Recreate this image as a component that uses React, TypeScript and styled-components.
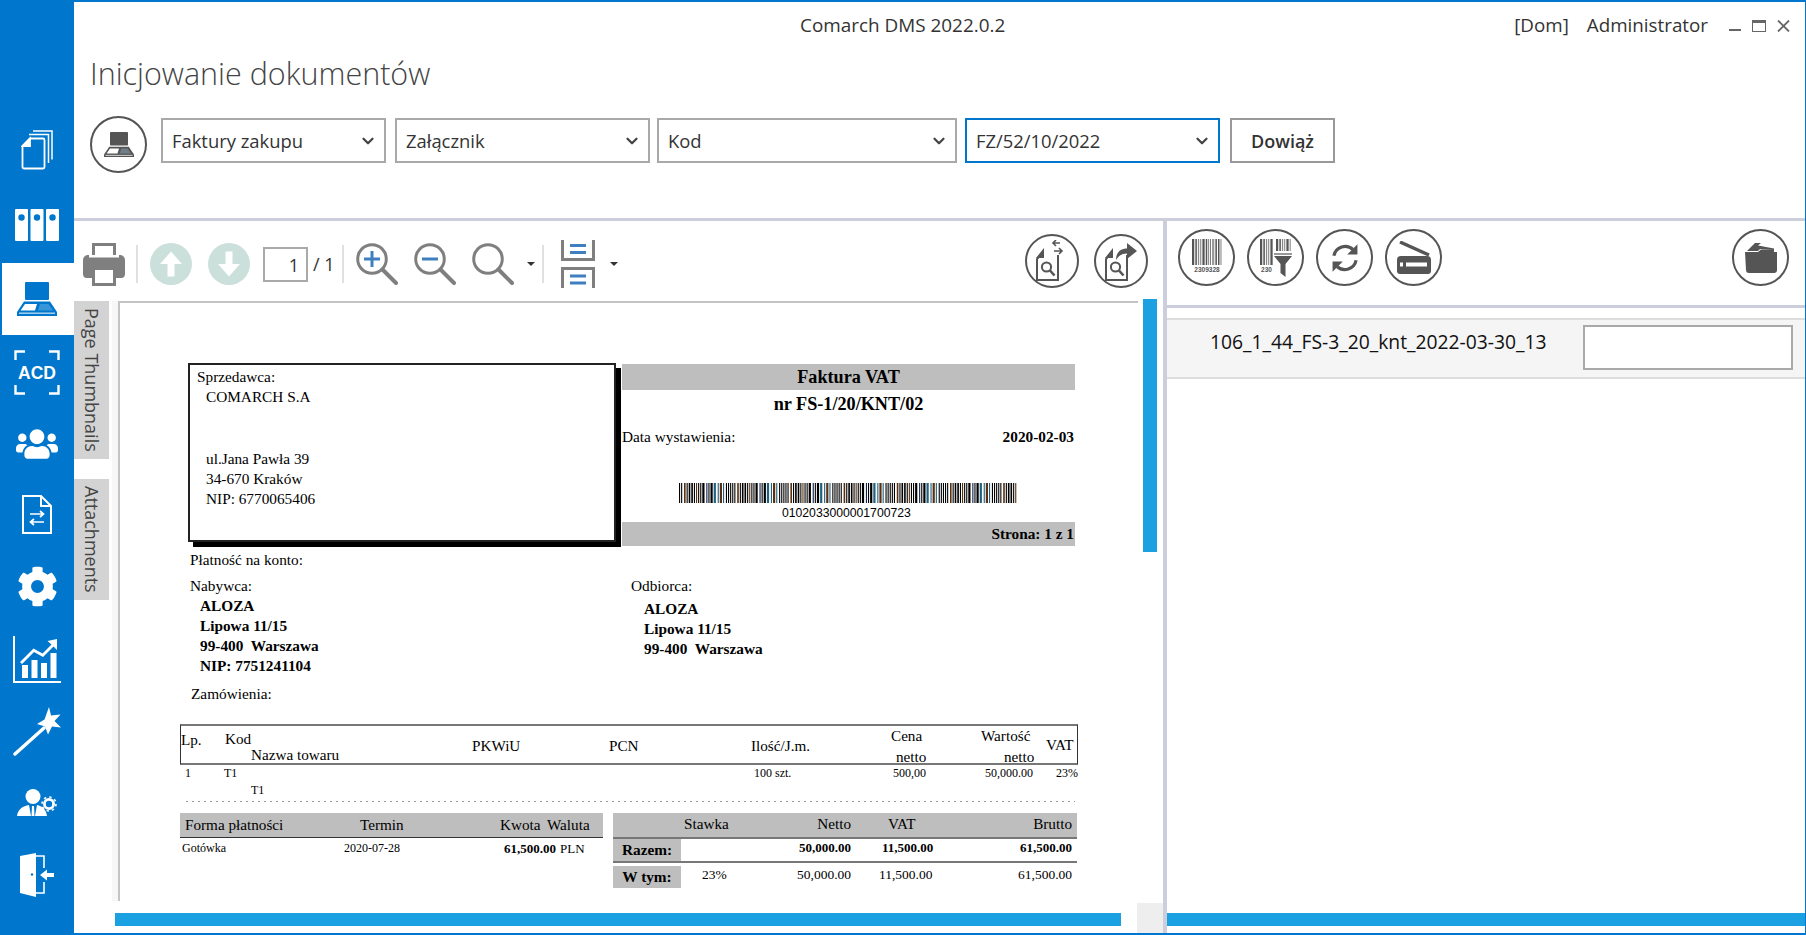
import React, { FC, ReactNode } from 'react'
import styled, { createGlobalStyle } from 'styled-components'
import { ChevronDown } from 'lucide-react'
import { FaCog, FaUsers } from 'react-icons/fa'

const BLUE = '#0077cc'
const SCROLL = '#1ba1e2'
const DARK = '#555555'
const GRAY = '#7f7f7f'
const LINE = '#cccedb'
const BAND = '#bebebe'

const GlobalStyle = createGlobalStyle`
  html, body { margin: 0; padding: 0; background: #fff; overflow: hidden; }
  * { box-sizing: border-box; }
`

/* ---------- sidebar icons ---------- */

const DocsIcon = () => (
  <svg width="32" height="40" viewBox="0 0 32 40" fill="none" stroke="#fff" strokeWidth="1.8">
    <path d="M9 8.5H22a1.5 1.5 0 0 1 1.5 1.5V37a1.5 1.5 0 0 1-1.5 1.5H3A1.5 1.5 0 0 1 1.5 37V16Z" />
    <path d="M9 8.5V16H1.5Z" fill="#fff" />
    <path d="M8 4.5H27.5V33M12 1H31V29.5" strokeWidth="1.5" />
  </svg>
)

const BindersIcon = () => (
  <svg width="44" height="32" viewBox="0 0 44 32">
    {[0, 15.5, 31].map((x) => (
      <g key={x}>
        <rect x={x} y="0" width="13" height="32" rx="1" fill="#fff" />
        <circle cx={x + 6.5} cy="8.5" r="3.2" fill={BLUE} />
      </g>
    ))}
  </svg>
)

const ScannerIcon: FC<{ fill: string; w?: number }> = ({ fill, w = 40 }) => (
  <svg width={w} height={w * 0.85} viewBox="0 0 40 34">
    <rect x="8" y="0" width="24" height="18" rx="1" fill={fill} />
    <path d="M7 19.5H33L40 30V34H0V30Z" fill={fill} />
    <path d="M8 22H20L18 28.5H3.5Z" fill="#fff" />
    <path d="M23 22H31.5L36 28.5H21Z" fill="#9fcdee" opacity="0.35" />
    <rect x="2" y="30.5" width="36" height="1.4" fill="#fff" opacity="0.7" />
  </svg>
)

const AcdIcon = () => (
  <svg width="46" height="45" viewBox="0 0 46 45" fill="none" stroke="#fff" strokeWidth="2.4">
    <path d="M1.5 10V1.5H11M35 1.5H44.5V10M1.5 35V43.5H11M35 43.5H44.5V35" />
    <text x="23" y="28.5" textAnchor="middle" fill="#fff" stroke="none" fontFamily="Liberation Sans" fontWeight="700" fontSize="17.5">
      ACD
    </text>
  </svg>
)

const SwapDocIcon = () => (
  <svg width="30" height="39" viewBox="0 0 30 39" fill="none" stroke="#fff" strokeWidth="2">
    <path d="M1 1H19L29 11V38H1Z" />
    <path d="M19 1V11H29" />
    <path d="M8 19H21M18 16l3.5 3-3.5 3M22 27H9M12 24l-3.5 3 3.5 3" strokeWidth="1.7" />
  </svg>
)

const ChartIcon = () => (
  <svg width="48" height="47" viewBox="0 0 48 47" fill="none" stroke="#fff">
    <path d="M1 0V46H48" strokeWidth="2" />
    <g fill="#fff" stroke="none">
      <rect x="9" y="29" width="6" height="13" />
      <rect x="18.5" y="24" width="6" height="18" />
      <rect x="28" y="27" width="6" height="15" />
      <rect x="37.5" y="17" width="6" height="25" />
      <path d="M44 3V14L40.5 10.5 30 21 21 16 9 28 7 26 20.5 12.5 29.5 17.5 38.5 8.5 34.5 5Z" />
    </g>
  </svg>
)

const WandIcon = () => (
  <svg width="48" height="49" viewBox="0 0 48 49">
    <path d="M2 47L31 21" stroke="#fff" strokeWidth="3.4" strokeLinecap="round" />
    <path d="M36 0L38 8.5 47.5 7.5 41.5 14 48 20.5 39 19.5 35 27.5 32 19.5 24 17 31.5 12.5Z" fill="#fff" />
  </svg>
)

const UserGearIcon = () => (
  <svg width="40" height="27" viewBox="0 0 40 27">
    <circle cx="16" cy="7.5" r="7.5" fill="#fff" />
    <path d="M0 27C1 20 6 17 12 16L14 27ZM20 16C25 17 29 20 30 27H18Z" fill="#fff" />
    <path d="M15 17H17L17.5 27H14.5Z" fill="#fff" />
    <circle cx="32" cy="15" r="4.6" fill="none" stroke="#fff" strokeWidth="2.8" />
    <circle cx="32" cy="15" r="7" fill="none" stroke="#fff" strokeWidth="1.6" strokeDasharray="2.4 3.1" />
  </svg>
)

const DoorIcon = () => (
  <svg width="34" height="44" viewBox="0 0 34 44" fill="none">
    <path d="M0 3L16 0V44L0 40Z" fill="#fff" />
    <circle cx="12" cy="21.5" r="1.2" fill={BLUE} />
    <path d="M16 3H24V15M24 29V40H16" stroke="#fff" strokeWidth="1.6" />
    <path d="M34 20H27V16.5L20 22 27 27.5V24H34Z" fill="#fff" />
  </svg>
)

/* ---------- toolbar icons ---------- */

const PrintIcon = () => (
  <svg width="42" height="43" viewBox="0 0 42 43" fill="none">
    <path d="M10.5 12V1.5H31.5V12" stroke={GRAY} strokeWidth="3" />
    <path d="M5 12H6V14.5H36V12H37a5 5 0 0 1 5 5V31a4 4 0 0 1-4 4H4a4 4 0 0 1-4-4V17a5 5 0 0 1 5-5Z" fill={GRAY} />
    <rect x="10.5" y="25.5" width="21" height="16" fill="#fff" stroke={GRAY} strokeWidth="3" />
  </svg>
)

const ArrowDisc: FC<{ down?: boolean }> = ({ down }) => (
  <svg width="42" height="42" viewBox="0 0 42 42">
    <circle cx="21" cy="21" r="21" fill="#cbe0da" />
    <path d={down ? 'M17.5 8.5H24.5V21H32L21 33.5 10 21H17.5Z' : 'M17.5 33.5H24.5V21H32L21 8.5 10 21H17.5Z'} fill="#fff" />
  </svg>
)

const Lens: FC<{ mark?: 'plus' | 'minus' }> = ({ mark }) => (
  <svg width="42" height="42" viewBox="0 0 42 42" fill="none">
    <circle cx="16" cy="16" r="14.3" stroke={GRAY} strokeWidth="3" />
    <path d="M26.5 26.5L40 40" stroke={GRAY} strokeWidth="4" strokeLinecap="round" />
    {mark && <path d="M8 16H24" stroke="#3f7fbf" strokeWidth="3" />}
    {mark === 'plus' && <path d="M16 8V24" stroke="#3f7fbf" strokeWidth="3" />}
  </svg>
)

const PageViewIcon = () => (
  <svg width="34" height="48" viewBox="0 0 34 48" fill="none">
    <path d="M1.5 0V19.5H32.5V0M1.5 48V28.5H32.5V48" stroke={GRAY} strokeWidth="3" />
    <path d="M9 5.5H25M9 12.5H25M9 36H25M9 43H25" stroke="#3f7fbf" strokeWidth="3" />
  </svg>
)

const Caret = styled.span`
  width: 0;
  height: 0;
  border-left: 4.5px solid transparent;
  border-right: 4.5px solid transparent;
  border-top: 4.5px solid #333;
`

const DocSearch: FC<{ share?: boolean }> = ({ share }) => (
  <svg width="34" height="42" viewBox="0 0 34 42" fill="none" stroke={DARK}>
    <path d="M8 15V12L2 19V40H23V15" strokeWidth="2" fill="#fff" />
    <path d="M9 8L1 18H9Z" fill={DARK} stroke="none" />
    <circle cx="11.5" cy="27" r="4.6" strokeWidth="2" />
    <path d="M15 30.5L19.5 35.5" strokeWidth="2.6" />
    {share ? (
      <path d="M12 20C12 12 17 8.5 23 8.5V3L33 11 23 19V13.5C18 13.5 15 15.5 12 20Z" fill={DARK} stroke="none" />
    ) : (
      <path d="M25 3L18 3M21 0L18 3l3 3M19 11H27M24 8l3 3-3 3" strokeWidth="1.6" />
    )}
  </svg>
)

const barsA = [3, 2, 1, 2, 3, 2, 1, 1, 3, 2, 2, 1, 3, 1, 2, 2, 3, 1, 3, 2, 1]

const BarcodeGlyph: FC<{ w: number; h: number; label: string }> = ({ w, h, label }) => {
  let x = 0
  const bars: ReactNode[] = []
  barsA.forEach((b, i) => {
    if (x + b * 0.8 > w) return
    bars.push(<rect key={i} x={x} y="0" width={b * 0.75} height={h} fill={i % 5 === 3 ? '#999' : DARK} />)
    x += b * 0.75 + 1.1
  })
  return (
    <>
      {bars}
      <text x={w / 2} y={h + 6.5} textAnchor="middle" fontSize="6.5" fontFamily="Liberation Sans" fontWeight="700" fill={DARK}>
        {label}
      </text>
    </>
  )
}

const BarcodeIcon = () => (
  <svg width="30" height="38" viewBox="0 0 30 38">
    <BarcodeGlyph w={30} h={26} label="2309328" />
  </svg>
)

const BarcodeFilterIcon = () => (
  <svg width="32" height="38" viewBox="0 0 32 38">
    <BarcodeGlyph w={13} h={26} label="230" />
    <g transform="translate(16 0)">
      <BarcodeGlyph w={15} h={12} label="" />
    </g>
    <rect x="14" y="14" width="18" height="2" fill="#999" />
    <path d="M14 17H32L25.5 25V38L20.5 34V25Z" fill={DARK} />
  </svg>
)

const RefreshIcon = () => (
  <svg width="32" height="32" viewBox="0 0 36 36" fill="none" stroke={DARK} strokeWidth="3.6">
    <path d="M5.5 15.5A13 13 0 0 1 27 8.5" />
    <path d="M30.5 20.5A13 13 0 0 1 9 27.5" />
    <path d="M32 2.5V14H20.5Z" fill={DARK} stroke="none" />
    <path d="M4 33.5V22H15.5Z" fill={DARK} stroke="none" />
  </svg>
)

const FlatbedIcon = () => (
  <svg width="36" height="34" viewBox="0 0 36 34">
    <path d="M4 1L33 14" stroke={DARK} strokeWidth="3.4" />
    <path d="M5 15H31a4 4 0 0 1 4 4V30a3 3 0 0 1-3 3H4a3 3 0 0 1-3-3V19a4 4 0 0 1 4-4Z" fill={DARK} />
    <rect x="10" y="21.5" width="21" height="4" fill="#fff" />
    <rect x="4" y="21.5" width="3" height="4" fill="#fff" />
  </svg>
)

const FolderIcon = () => (
  <svg width="32" height="30" viewBox="0 0 32 30">
    <path d="M2 8L10 0H16L13 2.5 29 5.5 29 7 15 6 13 8Z" fill={DARK} />
    <path d="M0 9H32V27a3 3 0 0 1-3 3H4a3 3 0 0 1-3-3Z" fill={DARK} />
    <path d="M13 9L16 6.5H29V9Z" fill={DARK} />
  </svg>
)

const barcodeRects = () => {
  const rects: ReactNode[] = []
  let seed = 17
  let x = 0
  const tints = ['#000', '#000', '#000', '#102050', '#5a3010', '#000', '#206080', '#000']
  while (x < 338) {
    seed = (seed * 73 + 41) % 211
    const w = 1 + (seed % 3 === 0 ? 1.2 : seed % 5 === 0 ? 0.6 : 0.1)
    rects.push(<rect key={x} x={x} y="0" width={w} height="20" fill={tints[seed % 8]} />)
    x += w + (seed % 7 === 0 ? 1.8 : 1)
  }
  return rects
}

/* ---------- page ---------- */

const App: FC = () => (
  <>
    <GlobalStyle />
    <Window>
      <Sidebar>
        <NavItem $h={74}><DocsIcon /></NavItem>
        <NavItem $h={76}><BindersIcon /></NavItem>
        <NavItem $h={72} $active><ScannerIcon fill={BLUE} /></NavItem>
        <NavItem $h={74}><AcdIcon /></NavItem>
        <NavItem $h={69}><FaUsers size={42} color="#fff" /></NavItem>
        <NavItem $h={72}><SwapDocIcon /></NavItem>
        <NavItem $h={72}><FaCog size={41} color="#fff" /></NavItem>
        <NavItem $h={75}><ChartIcon /></NavItem>
        <NavItem $h={68}><WandIcon /></NavItem>
        <NavItem $h={75}><UserGearIcon /></NavItem>
        <NavItem $h={70}><DoorIcon /></NavItem>
      </Sidebar>

      <Main>
        <Header>
          <TitleBar>
            <AppTitle>Comarch DMS 2022.0.2</AppTitle>
            <UserArea>
              <span>[Dom]</span>
              <span>Administrator</span>
            </UserArea>
            <WindowButtons>
              <MinButton />
              <MaxButton />
              <svg width="13" height="12" viewBox="0 0 13 12" stroke="#666" strokeWidth="1.8">
                <path d="M1 0.5L12 11.5M12 0.5L1 11.5" />
              </svg>
            </WindowButtons>
          </TitleBar>
          <PageTitle>Inicjowanie dokumentów</PageTitle>
          <Controls>
            <RoundButton $w={57} $h={57}>
              <ScannerIcon fill={DARK} w={30} />
            </RoundButton>
            <Select $w={225} $ml={14}>
              Faktury zakupu
              <ChevronDown size={18} strokeWidth={3} color="#444" />
            </Select>
            <Select $w={255} $ml={9}>
              Załącznik
              <ChevronDown size={18} strokeWidth={3} color="#444" />
            </Select>
            <Select $w={300} $ml={7}>
              Kod
              <ChevronDown size={18} strokeWidth={3} color="#444" />
            </Select>
            <Select $w={255} $ml={8} $focused>
              FZ/52/10/2022
              <ChevronDown size={18} strokeWidth={3} color="#444" />
            </Select>
            <LinkButton>Dowiąż</LinkButton>
          </Controls>
        </Header>

        <Body>
          <ViewerPanel>
            <ViewerToolbar>
              <PrintIcon />
              <ToolSep $ml={11} $mr={12} />
              <ArrowDisc />
              <Spaced $ml={16}><ArrowDisc down /></Spaced>
              <PageInput>1</PageInput>
              <PageCount>/ 1</PageCount>
              <ToolSep $ml={9} $mr={12} />
              <Lens mark="plus" />
              <Spaced $ml={16}><Lens mark="minus" /></Spaced>
              <Spaced $ml={16}><Lens /></Spaced>
              <Spaced $ml={13}><Caret /></Spaced>
              <ToolSep $ml={7} $mr={17} />
              <PageViewIcon />
              <Spaced $ml={15}><Caret /></Spaced>
              <ToolRight>
                <RoundButton $w={54} $h={54}><DocSearch /></RoundButton>
                <RoundButton $w={54} $h={54}><DocSearch share /></RoundButton>
              </ToolRight>
            </ViewerToolbar>

            <ViewerBody>
              <SideTabs>
                <SideTab $h={158}>Page Thumbnails</SideTab>
                <SideTab $h={121}>Attachments</SideTab>
              </SideTabs>
              <Sheet>
                <SheetTop>
                  <SellerBox>
                    <Line>Sprzedawca:</Line>
                    <Line $pl={9}>COMARCH S.A</Line>
                    <Line $pl={9} $mt={42}>ul.Jana Pawła 39</Line>
                    <Line $pl={9}>34-670 Kraków</Line>
                    <Line $pl={9}>NIP: 6770065406</Line>
                  </SellerBox>
                  <InvoiceHead>
                    <TitleBand>Faktura VAT</TitleBand>
                    <InvoiceNumber>nr FS-1/20/KNT/02</InvoiceNumber>
                    <DateRow>
                      <span>Data wystawienia:</span>
                      <b>2020-02-03</b>
                    </DateRow>
                    <BarcodeBox>
                      <svg width="338" height="20" viewBox="0 0 338 20">{barcodeRects()}</svg>
                      <BarcodeNumber>0102033000001700723</BarcodeNumber>
                    </BarcodeBox>
                    <PageBand>Strona: 1 z 1</PageBand>
                  </InvoiceHead>
                </SheetTop>

                <Line $pl={10} $mt={4}>Płatność na konto:</Line>
                <Parties>
                  <Party $w={451} $pl={10}>
                    <Line>Nabywca:</Line>
                    <Line $pl={10} $bold>ALOZA</Line>
                    <Line $pl={10} $bold>Lipowa 11/15</Line>
                    <Line $pl={10} $bold>99-400&nbsp; Warszawa</Line>
                    <Line $pl={10} $bold>NIP: 7751241104</Line>
                  </Party>
                  <Party $w={300}>
                    <Line>Odbiorca:</Line>
                    <Line $pl={13} $mt={3} $bold>ALOZA</Line>
                    <Line $pl={13} $bold>Lipowa 11/15</Line>
                    <Line $pl={13} $bold>99-400&nbsp; Warszawa</Line>
                  </Party>
                </Parties>
                <Line $pl={11} $mt={8}>Zamówienia:</Line>

                <ItemsHead>
                  <HeadCell $pt={6}>Lp.</HeadCell>
                  <HeadCell $pt={5}>
                    Kod
                    <HeadSub>Nazwa towaru</HeadSub>
                  </HeadCell>
                  <HeadCell $pt={12}>PKWiU</HeadCell>
                  <HeadCell $pt={12}>PCN</HeadCell>
                  <HeadCell $pt={12}>Ilość/J.m.</HeadCell>
                  <HeadCell $pt={2} $pl={10}>
                    Cena
                    <HeadNetto $pl={5}>netto</HeadNetto>
                  </HeadCell>
                  <HeadCell $pt={2}>
                    Wartość
                    <HeadNetto $pl={23}>netto</HeadNetto>
                  </HeadCell>
                  <HeadCell $pt={11}>VAT</HeadCell>
                </ItemsHead>
                <ItemsRow>
                  <ItemCell $pl={5}>1</ItemCell>
                  <ItemCell>
                    T1
                    <ItemSub>T1</ItemSub>
                  </ItemCell>
                  <ItemCell />
                  <ItemCell />
                  <ItemCell $pl={4}>100 szt.</ItemCell>
                  <ItemCell $pl={13}>500,00</ItemCell>
                  <ItemCell $pl={5}>50,000.00</ItemCell>
                  <ItemCell $pl={11}>23%</ItemCell>
                </ItemsRow>
                <DottedRule />

                <Summary>
                  <PayTable>
                    <PayHead>
                      <PayCell $pl={5}>Forma płatności</PayCell>
                      <PayCell $pl={16}>Termin</PayCell>
                      <PayCell>Kwota</PayCell>
                      <PayCell>Waluta</PayCell>
                    </PayHead>
                    <PayRow>
                      <PayCell $pl={2}>Gotówka</PayCell>
                      <PayCell>2020-07-28</PayCell>
                      <PayAmount $pl={4}>61,500.00</PayAmount>
                      <PayAmount $pl={13} $plain>PLN</PayAmount>
                    </PayRow>
                  </PayTable>
                  <TotalsTable>
                    <TotalsHead>
                      <span />
                      <TotalCell $pl={3}>Stawka</TotalCell>
                      <TotalCell $right>Netto</TotalCell>
                      <TotalCell $pl={37}>VAT</TotalCell>
                      <TotalCell $right>Brutto</TotalCell>
                    </TotalsHead>
                    <TotalsRow>
                      <TotalLabel>Razem:</TotalLabel>
                      <span />
                      <TotalCell $right $bold>50,000.00</TotalCell>
                      <TotalCell $pl={31} $bold>11,500.00</TotalCell>
                      <TotalCell $right $bold>61,500.00</TotalCell>
                    </TotalsRow>
                    <TotalsRule />
                    <TotalsRow>
                      <TotalLabel>W tym:</TotalLabel>
                      <TotalCell $pl={21}>23%</TotalCell>
                      <TotalCell $right>50,000.00</TotalCell>
                      <TotalCell $pl={28}>11,500.00</TotalCell>
                      <TotalCell $right>61,500.00</TotalCell>
                    </TotalsRow>
                  </TotalsTable>
                </Summary>
              </Sheet>
              <VThumb />
            </ViewerBody>

            <HScrollRow>
              <HThumb $w={1006} />
              <ScrollCorner />
            </HScrollRow>
          </ViewerPanel>

          <QueuePanel>
            <QueueToolbar>
              <RoundButton $w={57} $h={57}><BarcodeIcon /></RoundButton>
              <RoundButton $w={57} $h={57}><BarcodeFilterIcon /></RoundButton>
              <RoundButton $w={57} $h={57}><RefreshIcon /></RoundButton>
              <RoundButton $w={57} $h={57}><FlatbedIcon /></RoundButton>
              <ToolRight>
                <RoundButton $w={57} $h={57}><FolderIcon /></RoundButton>
              </ToolRight>
            </QueueToolbar>
            <QueueList>
              <QueueRow>
                <QueueName>106_1_44_FS-3_20_knt_2022-03-30_13</QueueName>
                <QueueInput />
              </QueueRow>
            </QueueList>
            <QueueScroll>
              <HThumb $w={639} />
            </QueueScroll>
          </QueuePanel>
        </Body>
      </Main>
    </Window>
  </>
)

export default App

const UI_FONT = `'Open Sans', 'Noto Sans', sans-serif`
const DOC_FONT = `'Liberation Serif', 'Times New Roman', serif`

const Window = styled.div`
  display: flex;
  width: 1806px;
  height: 935px;
  overflow: hidden;
  background: #fff;
  border-top: 2px solid ${BLUE};
  border-right: 1px solid ${BLUE};
  border-bottom: 2px solid ${BLUE};
  font-family: ${UI_FONT};
  color: #333;
`

const Sidebar = styled.nav`
  flex: 0 0 74px;
  padding-top: 111px;
  background: ${BLUE};
`

const NavItem = styled.div<{ $h: number; $active?: boolean }>`
  display: flex;
  align-items: center;
  justify-content: center;
  height: ${({ $h }) => $h}px;
  margin-left: ${({ $active }) => ($active ? '2px' : '0')};
  padding-right: ${({ $active }) => ($active ? '2px' : '0')};
  background: ${({ $active }) => ($active ? '#fff' : 'transparent')};
`

const Main = styled.div`
  display: flex;
  flex: 1;
  flex-direction: column;
  min-width: 0;
`

const Header = styled.header`
  flex: 0 0 219px;
  border-bottom: 3px solid ${LINE};
`

const TitleBar = styled.div`
  display: flex;
  align-items: center;
  height: 46px;
  padding: 0 15px 0 726px;
`

const AppTitle = styled.div`
  font-size: 18.9px;
  white-space: nowrap;
`

const UserArea = styled.div`
  display: flex;
  gap: 18px;
  margin-left: auto;
  font-size: 18.8px;
`

const WindowButtons = styled.div`
  display: flex;
  align-items: flex-end;
  gap: 11px;
  margin-left: 21px;
  padding-top: 2px;
`

const MinButton = styled.div`
  width: 12px;
  height: 2px;
  margin-bottom: 1px;
  background: #666;
`

const MaxButton = styled.div`
  width: 14px;
  height: 12px;
  border: 1.5px solid #666;
  border-top-width: 3px;
`

const PageTitle = styled.h1`
  height: 68px;
  margin: 0;
  padding: 7px 0 0 16px;
  font-size: 30.5px;
  line-height: 36px;
  font-weight: 300;
  color: #444;
`

const Controls = styled.div`
  display: flex;
  align-items: flex-start;
  padding-left: 16px;
`

const RoundButton = styled.div<{ $w: number; $h: number }>`
  display: flex;
  flex: none;
  align-items: center;
  justify-content: center;
  width: ${({ $w }) => $w}px;
  height: ${({ $h }) => $h}px;
  border: 2.5px solid ${DARK};
  border-radius: 50%;
  background: #fff;
`

const Select = styled.div<{ $w: number; $ml: number; $focused?: boolean }>`
  display: flex;
  align-items: center;
  justify-content: space-between;
  width: ${({ $w }) => $w}px;
  height: 45px;
  margin: 2px 0 0 ${({ $ml }) => $ml}px;
  padding: 0 7px 0 9px;
  border: 2px solid ${({ $focused }) => ($focused ? BLUE : '#a9a9a9')};
  font-size: 18.4px;
  color: #333;
`

const LinkButton = styled.div`
  display: flex;
  align-items: center;
  justify-content: center;
  width: 105px;
  height: 45px;
  margin: 2px 0 0 10px;
  border: 2px solid #999;
  font-size: 18px;
  font-weight: 600;
  color: #333;
`

const Body = styled.div`
  display: flex;
  flex: 1;
  min-height: 0;
`

const ViewerPanel = styled.section`
  display: flex;
  flex: 0 0 1089px;
  flex-direction: column;
  min-width: 0;
`

const ViewerToolbar = styled.div`
  display: flex;
  flex: 0 0 80px;
  align-items: center;
  padding: 6px 15px 0 9px;
`

const ToolSep = styled.span<{ $ml: number; $mr: number }>`
  width: 2px;
  height: 38px;
  margin: 0 ${({ $mr }) => $mr}px 0 ${({ $ml }) => $ml}px;
  background: #e0e0e0;
`

const Spaced = styled.span<{ $ml: number }>`
  display: flex;
  margin-left: ${({ $ml }) => $ml}px;
`

const PageInput = styled.div`
  width: 45px;
  height: 35px;
  margin-left: 13px;
  padding-right: 7px;
  border: 2px solid #a9a9a9;
  font-size: 18px;
  line-height: 33px;
  text-align: right;
`

const PageCount = styled.span`
  width: 20px;
  margin-left: 5px;
  font-size: 18px;
  white-space: nowrap;
`

const ToolRight = styled.div`
  display: flex;
  gap: 15px;
  margin-left: auto;
  margin-bottom: 6px;
`

const ViewerBody = styled.div`
  position: relative;
  display: flex;
  flex: 1;
  min-height: 0;
`

const SideTabs = styled.div`
  display: flex;
  flex: 0 0 44px;
  flex-direction: column;
  gap: 20px;
`

const SideTab = styled.div<{ $h: number }>`
  display: flex;
  align-items: center;
  justify-content: center;
  width: 35px;
  height: ${({ $h }) => $h}px;
  background: #d3d3d3;
  font-size: 18px;
  color: #444;
  white-space: nowrap;
  writing-mode: vertical-rl;
`

const Sheet = styled.div`
  width: 1020px;
  overflow: hidden;
  padding-left: 60px;
  border-top: 2px solid #c4c4c4;
  border-left: 2px solid #c4c4c4;
  box-shadow: -6px 0 0 #f7f7f7;
  font-family: ${DOC_FONT};
  font-size: 15.3px;
  line-height: 20px;
  color: #000;
`

const VThumb = styled.div`
  position: absolute;
  top: -2px;
  left: 1069px;
  width: 14px;
  height: 253px;
  background: ${SCROLL};
`

const SheetTop = styled.div`
  display: flex;
  margin-top: 60px;
  padding-left: 8px;
`

const SellerBox = styled.div`
  flex: none;
  width: 428px;
  height: 179px;
  padding: 2px 7px;
  border: 2px solid #222;
  box-shadow: 5px 5px 0 #000;
`

const Line = styled.div<{ $pl?: number; $mt?: number; $bold?: boolean }>`
  padding-left: ${({ $pl }) => $pl ?? 0}px;
  margin-top: ${({ $mt }) => $mt ?? 0}px;
  font-weight: ${({ $bold }) => ($bold ? 700 : 400)};
  white-space: nowrap;
`

const InvoiceHead = styled.div`
  flex: none;
  width: 453px;
  margin: 1px 0 0 6px;
`

const TitleBand = styled.div`
  height: 26px;
  background: ${BAND};
  font-size: 18.2px;
  font-weight: 700;
  line-height: 26px;
  text-align: center;
`

const InvoiceNumber = styled.div`
  height: 28px;
  font-size: 18.2px;
  font-weight: 700;
  line-height: 28px;
  text-align: center;
`

const DateRow = styled.div`
  display: flex;
  align-items: center;
  justify-content: space-between;
  height: 38px;
  padding-right: 1px;
`

const BarcodeBox = styled.div`
  display: flex;
  flex-direction: column;
  height: 66px;
  padding: 27px 0 0 57px;

  svg {
    flex: none;
  }
`

const BarcodeNumber = styled.div`
  padding: 1px 0 0 103px;
  font-family: 'Liberation Sans', Arial, sans-serif;
  font-size: 12.2px;
  line-height: 19px;
`

const PageBand = styled.div`
  height: 24px;
  padding-right: 1px;
  background: ${BAND};
  font-weight: 700;
  line-height: 24px;
  text-align: right;
`

const Parties = styled.div`
  display: flex;
  margin-top: 6px;
`

const Party = styled.div<{ $w: number; $pl?: number }>`
  flex: none;
  width: ${({ $w }) => $w}px;
  padding-left: ${({ $pl }) => $pl ?? 0}px;
`

const ITEM_COLS = '44px 247px 137px 142px 130px 100px 65px 33px'

const ItemsHead = styled.div`
  display: grid;
  grid-template-columns: ${ITEM_COLS};
  width: 898px;
  height: 41px;
  margin-top: 20px;
  border-top: 2px solid #777;
  border-right: 1px solid #333;
  border-bottom: 2px solid #777;
  border-left: 1px solid #333;
  font-size: 15.2px;
  line-height: 16px;
`

const HeadCell = styled.div<{ $pt: number; $pl?: number }>`
  padding: ${({ $pt }) => $pt}px 0 0 ${({ $pl }) => $pl ?? 0}px;
  white-space: nowrap;
`

const HeadSub = styled.div`
  padding-left: 26px;
`

const HeadNetto = styled.div<{ $pl: number }>`
  margin-top: 5px;
  padding-left: ${({ $pl }) => $pl}px;
`

const ItemsRow = styled.div`
  display: grid;
  grid-template-columns: ${ITEM_COLS};
  width: 898px;
  height: 36px;
  font-size: 12px;
  line-height: 16px;
`

const ItemCell = styled.div<{ $pl?: number }>`
  padding: 0 0 0 ${({ $pl }) => $pl ?? 0}px;
  white-space: nowrap;
`

const ItemSub = styled.div`
  padding: 1px 0 0 27px;
`

const DottedRule = styled.div`
  width: 889px;
  height: 1px;
  margin-left: 6px;
  background: repeating-linear-gradient(to right, #999 0 2px, transparent 2px 6px);
`

const Summary = styled.div`
  display: flex;
  gap: 10px;
  margin-top: 11px;
`

const PayTable = styled.div`
  flex: 0 0 423px;
`

const PAY_COLS = '164px 156px 47px 56px'

const PayHead = styled.div`
  display: grid;
  grid-template-columns: ${PAY_COLS};
  height: 25px;
  border-bottom: 1px solid #333;
  background: ${BAND};
  font-size: 15.2px;
  line-height: 24px;
`

const PayRow = styled.div`
  display: grid;
  grid-template-columns: ${PAY_COLS};
  padding-top: 2px;
  font-size: 12px;
  line-height: 17px;
`

const PayCell = styled.div<{ $pl?: number }>`
  padding-left: ${({ $pl }) => $pl ?? 0}px;
  white-space: nowrap;
`

const PayAmount = styled(PayCell)<{ $plain?: boolean }>`
  font-size: 13px;
  font-weight: ${({ $plain }) => ($plain ? 400 : 700)};
`

const TotalsTable = styled.div`
  flex: 0 0 464px;
`

const TOTAL_COLS = '68px 71px 99px 100px 121px'

const TotalsHead = styled.div`
  display: grid;
  grid-template-columns: ${TOTAL_COLS};
  height: 26px;
  border-bottom: 2px solid #777;
  background: ${BAND};
  font-size: 15.2px;
  line-height: 22px;
`

const TotalsRow = styled.div`
  display: grid;
  grid-template-columns: ${TOTAL_COLS};
  height: 22px;
  font-size: 13.5px;
  line-height: 18px;
`

const TotalsRule = styled.div`
  height: 2px;
  margin: 0 0 3px;
  background: #777;
`

const TotalCell = styled.div<{ $pl?: number; $right?: boolean; $bold?: boolean }>`
  padding-left: ${({ $pl }) => $pl ?? 0}px;
  font-size: ${({ $bold }) => ($bold ? '13px' : 'inherit')};
  font-weight: ${({ $bold }) => ($bold ? 700 : 400)};
  text-align: ${({ $right }) => ($right ? 'right' : 'left')};
  white-space: nowrap;
`

const TotalLabel = styled.div`
  margin-bottom: 1px;
  background: ${BAND};
  font-size: 15.3px;
  font-weight: 700;
  line-height: 22px;
  text-align: center;
`

const HScrollRow = styled.div`
  display: flex;
  flex: 0 0 32px;
  align-items: flex-start;
  padding-left: 41px;
`

const HThumb = styled.div<{ $w: number }>`
  flex: none;
  width: ${({ $w }) => $w}px;
  height: 13px;
  margin-top: 12px;
  background: ${SCROLL};
`

const ScrollCorner = styled.div`
  width: 26px;
  height: 30px;
  margin: 2px 0 0 16px;
  background: #eee;
`

const QueuePanel = styled.section`
  display: flex;
  flex: 1;
  flex-direction: column;
  min-width: 0;
  border-left: 4px solid ${LINE};
`

const QueueToolbar = styled.div`
  display: flex;
  flex: 0 0 87px;
  gap: 12px;
  padding: 8px 16px 0 11px;
  border-bottom: 3px solid ${LINE};
`

const QueueList = styled.div`
  flex: 1;
  padding-top: 10px;
`

const QueueRow = styled.div`
  display: flex;
  align-items: flex-start;
  justify-content: space-between;
  height: 61px;
  padding: 5px 12px 0 43px;
  border-top: 2px solid #ddd;
  border-bottom: 2px solid #ddd;
  background: #f5f5f5;
`

const QueueName = styled.div`
  padding-top: 5px;
  font-size: 19.3px;
  line-height: 24px;
  color: #111;
  white-space: nowrap;
`

const QueueInput = styled.div`
  width: 210px;
  height: 45px;
  border: 2px solid #a9a9a9;
  background: #fff;
`

const QueueScroll = styled.div`
  flex: 0 0 32px;
`
